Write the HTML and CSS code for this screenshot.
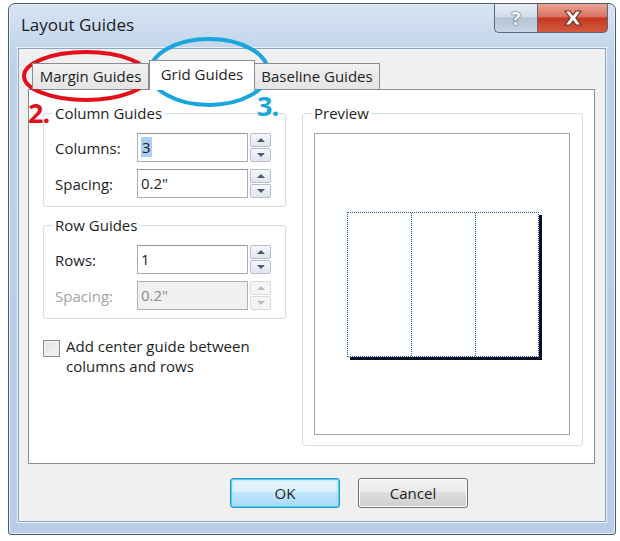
FILE: index.html
```html
<!DOCTYPE html>
<html lang="en">

<head>
  <meta charset="UTF-8">
  <meta name="viewport" content="width=device-width, initial-scale=1.0">
  <title>Layout Guides</title>
  <link rel="stylesheet" href="styles.css">
</head>

<body>
  <div class="window">
    <div class="titlebar">
      <span class="title">Layout Guides</span>
      <div class="caption-buttons">
        <span class="cap-btn cap-help">?</span>
        <span class="cap-btn cap-close">
          <svg width="20" height="16" viewBox="0 0 20 16">
            <path d="M2 1 H7 L10 5 L13 1 H18 L12.8 8 L18 15 H13 L10 11 L7 15 H2 L7.2 8 Z" fill="#ffffff" stroke="#6e2a22" stroke-width="1.2" stroke-linejoin="round" />
          </svg>
        </span>
      </div>
    </div>

    <div class="client">
      <div class="tabs">
        <div class="tab tab-margin">Margin Guides</div>
        <div class="tab tab-grid active">Grid Guides</div>
        <div class="tab tab-baseline">Baseline Guides</div>
      </div>

      <div class="panel">
        <div class="left-col">
          <fieldset class="group">
            <legend>Column Guides</legend>
            <div class="field-row">
              <span class="field-label">Columns:</span>
              <div class="textbox"><span class="selected">3</span></div>
              <div class="spinner">
                <span class="spin"><i class="arrow-up"></i></span>
                <span class="spin"><i class="arrow-down"></i></span>
              </div>
            </div>
            <div class="field-row">
              <span class="field-label">Spacing:</span>
              <div class="textbox">0.2"</div>
              <div class="spinner">
                <span class="spin"><i class="arrow-up"></i></span>
                <span class="spin"><i class="arrow-down"></i></span>
              </div>
            </div>
          </fieldset>

          <fieldset class="group group-rows">
            <legend>Row Guides</legend>
            <div class="field-row">
              <span class="field-label">Rows:</span>
              <div class="textbox">1</div>
              <div class="spinner">
                <span class="spin"><i class="arrow-up"></i></span>
                <span class="spin"><i class="arrow-down"></i></span>
              </div>
            </div>
            <div class="field-row disabled">
              <span class="field-label">Spacing:</span>
              <div class="textbox">0.2"</div>
              <div class="spinner">
                <span class="spin"><i class="arrow-up"></i></span>
                <span class="spin"><i class="arrow-down"></i></span>
              </div>
            </div>
          </fieldset>

          <div class="check-row">
            <span class="checkbox"></span>
            <span class="check-text">Add center guide between<br>columns and rows</span>
          </div>
        </div>

        <fieldset class="group preview-group">
          <legend>Preview</legend>
          <div class="preview-box">
            <div class="page-grid">
              <div class="page-col"></div>
              <div class="page-col"></div>
              <div class="page-col"></div>
            </div>
          </div>
        </fieldset>
      </div>

      <div class="buttons">
        <button type="button" class="btn btn-ok">OK</button>
        <button type="button" class="btn">Cancel</button>
      </div>
    </div>
  </div>

  <!-- annotations drawn over the dialog -->
  <span class="note note-red">2.</span>
  <span class="note note-blue">3.</span>
  <svg class="marks" width="620" height="541" viewBox="0 0 620 541">
    <ellipse cx="86" cy="76" rx="62" ry="24" fill="none" stroke="#e3101c" stroke-width="4" />
    <ellipse cx="209" cy="72" rx="59" ry="33" fill="none" stroke="#19a6de" stroke-width="4" />
  </svg>
</body>

</html>
```

FILE: styles.css
```css
* {
  box-sizing: border-box;
}

body {
  margin: 0;
  background-color: #ffffff;
  font-family: "Open Sans", "Noto Sans", sans-serif;
  color: #1e1e1e;
  position: relative;
  width: 620px;
  height: 541px;
  overflow: hidden;
}

.window {
  margin: 3px 0 0 8px;
  width: 608px;
  height: 532px;
  border: 1px solid #4e5b6c;
  border-radius: 7px 7px 3px 3px;
  background: linear-gradient(to bottom, #d6e3f2 0%, #bdd0e8 12%, #b9cde6 100%);
  box-shadow: inset 0 0 0 1px #e4edf7;
  padding: 0 9px 12px 9px;
  display: flex;
  flex-direction: column;
}

.titlebar {
  height: 44px;
  display: flex;
  justify-content: space-between;
  align-items: flex-start;
}

.title {
  padding: 11px 0 0 3px;
  font-size: 17px;
  line-height: 20px;
  color: #1a1a1a;
}

.caption-buttons {
  display: flex;
  margin-right: -2px;
}

.cap-btn {
  height: 29px;
  display: flex;
  align-items: center;
  justify-content: center;
  border: 1px solid #5c6878;
  border-top: none;
}

.cap-help {
  width: 43px;
  border-right: none;
  border-radius: 0 0 0 5px;
  background: linear-gradient(to bottom, #e6edf5 0%, #d2dce8 45%, #b5c3d4 50%, #c9d6e4 100%);
  color: #ffffff;
  font-weight: bold;
  font-size: 18px;
  text-shadow: 0 0 2px #3a4658, 0 0 1px #3a4658;
}

.cap-close {
  width: 71px;
  border-radius: 0 0 5px 0;
  background: linear-gradient(to bottom, #eaa596 0%, #d9725f 45%, #c4381f 50%, #d5593f 100%);
}

.client {
  flex: 1;
  background-color: #f0f0f0;
  border: 1px solid #8ba3c1;
  box-shadow: 0 0 0 1px #e8f0f9;
  padding: 11px 10px 0 9px;
  display: flex;
  flex-direction: column;
}

.tabs {
  display: flex;
  align-items: flex-end;
  height: 30px;
  padding-left: 4px;
  margin-bottom: -1px;
  position: relative;
  z-index: 1;
}

.tab {
  height: 26px;
  margin-bottom: 1px;
  border: 1px solid #898c95;
  border-bottom: none;
  background: linear-gradient(to bottom, #f2f2f2, #e4e4e4);
  font-size: 15px;
  line-height: 24px;
  text-align: center;
  color: #1e1e1e;
}

.tab-margin {
  width: 117px;
}

.tab-grid {
  width: 106px;
}

.tab-baseline {
  width: 125px;
  border-left: none;
}

.tab.active {
  height: 30px;
  margin-bottom: 0;
  background: #ffffff;
  line-height: 26px;
  border-left: 1px solid #898c95;
  border-right: 1px solid #898c95;
}

.panel {
  height: 375px;
  border: 1px solid #898c95;
  background-color: #ffffff;
  padding: 13px 0 0 14px;
  display: grid;
  grid-template-columns: 243px 281px;
  column-gap: 16px;
  align-items: start;
}

.group {
  margin: 0;
  border: 1px solid #d5dfe5;
  border-radius: 3px;
  padding: 10px 10px 8px 11px;
  min-width: 0;
}

.group legend {
  padding: 0 2px;
  margin-left: -2px;
  font-size: 15px;
  line-height: 20px;
  color: #1e1e1e;
}

.group-rows {
  margin-top: 8px;
}

.field-row {
  display: flex;
  align-items: center;
  height: 29px;
}

.field-row + .field-row {
  margin-top: 7px;
}

.field-label {
  width: 82px;
  font-size: 15px;
}

.textbox {
  width: 111px;
  height: 29px;
  border: 1px solid #abadb3;
  border-top-color: #8e939c;
  background-color: #ffffff;
  font-size: 15px;
  line-height: 27px;
  padding-left: 3px;
}

.selected {
  background-color: #a9cff2;
  padding: 0 1px;
}

.spinner {
  margin-left: 2px;
  width: 21px;
  height: 29px;
  display: flex;
  flex-direction: column;
  gap: 1px;
}

.spin {
  flex: 1;
  border: 1px solid #b7bfcc;
  border-radius: 2px;
  background: linear-gradient(to bottom, #f6f8fb, #dfe5ee);
  display: flex;
  align-items: center;
  justify-content: center;
}

.arrow-up {
  width: 0;
  height: 0;
  border-left: 4px solid transparent;
  border-right: 4px solid transparent;
  border-bottom: 4px solid #4b5a7a;
}

.arrow-down {
  width: 0;
  height: 0;
  border-left: 4px solid transparent;
  border-right: 4px solid transparent;
  border-top: 4px solid #4b5a7a;
}

.disabled .field-label {
  color: #a3a3a3;
}

.disabled .textbox {
  background-color: #f0f0f0;
  border-color: #adb2b5;
  color: #8a8a8a;
}

.disabled .spin {
  border-color: #d6d9de;
  background: #f4f4f4;
}

.disabled .arrow-up {
  border-bottom-color: #b8bcc4;
}

.disabled .arrow-down {
  border-top-color: #b8bcc4;
}

.check-row {
  margin-top: 17px;
  display: flex;
  align-items: flex-start;
}

.checkbox {
  width: 17px;
  height: 17px;
  margin-top: 4px;
  border: 1px solid #8f8f8f;
  background: linear-gradient(135deg, #dcdcdc, #f8f8f8);
  box-shadow: inset 0 0 0 2px #eeeeee;
}

.check-text {
  margin-left: 6px;
  font-size: 15px;
  line-height: 20px;
}

.preview-group {
  padding: 10px 12px 10px 11px;
}

.preview-box {
  height: 302px;
  border: 1px solid #a0a0a0;
  background-color: #ffffff;
  display: flex;
  align-items: center;
  justify-content: center;
}

.page-grid {
  width: 192px;
  height: 145px;
  border: 1px dotted #1a5ad6;
  background-color: #ffffff;
  box-shadow: 3px 3px 0 #0b0f1c;
  display: grid;
  grid-template-columns: 1fr 1fr 1fr;
  margin-left: 2px;
  margin-top: 1px;
}

.page-col + .page-col {
  border-left: 1px dotted #1a5ad6;
}

.buttons {
  display: flex;
  gap: 18px;
  padding: 14px 0 0 202px;
}

.btn {
  width: 110px;
  height: 30px;
  border-radius: 3px;
  font-family: "Open Sans", "Noto Sans", sans-serif;
  font-size: 15px;
  color: #1e1e1e;
  border: 1px solid #707070;
  background: linear-gradient(to bottom, #f2f2f2 0%, #ebebeb 45%, #dddddd 50%, #cfcfcf 100%);
  box-shadow: inset 0 0 0 1px #fbfbfb;
  padding: 0;
}

.btn-ok {
  border-color: #2f8fd0;
  background: linear-gradient(to bottom, #eaf6fd 0%, #d9f0fc 45%, #bee6fd 50%, #a7d9f5 100%);
  box-shadow: inset 0 0 0 1px #48d2f6, inset 0 0 3px 1px #8fe4fa;
}

.note {
  position: absolute;
  font-family: "Open Sans", "Noto Sans", sans-serif;
  font-weight: bold;
  font-size: 27px;
  line-height: 27px;
  letter-spacing: -1px;
}

.note-red {
  left: 28px;
  top: 99px;
  color: #e3101c;
}

.note-blue {
  left: 257px;
  top: 92px;
  color: #19a6de;
}

.marks {
  position: absolute;
  left: 0;
  top: 0;
  pointer-events: none;
}
```
